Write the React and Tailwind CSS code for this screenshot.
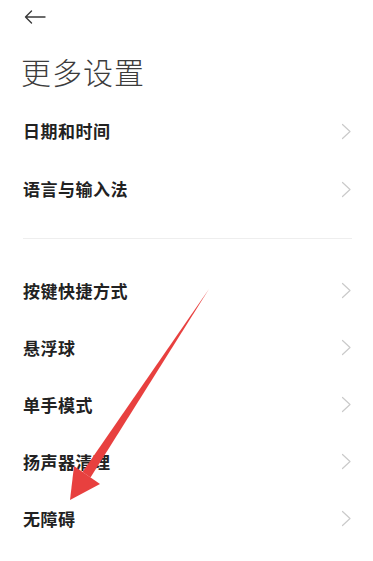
import React from 'react';

const groupOne = ['日期和时间', '语言与输入法'];
const groupTwo = ['按键快捷方式', '悬浮球', '单手模式', '扬声器清理', '无障碍'];

const Chevron = () => (
    <svg width="11" height="17" viewBox="0 0 11 17" fill="none">
        <polyline points="1.5,1.5 9,8.5 1.5,15.5" stroke="#cacaca" strokeWidth="1.2" strokeLinejoin="round" strokeLinecap="round" />
    </svg>
);

const Row = ({ label, h }) => (
    <div className={`flex items-center justify-between pl-[23px] pr-[21px] ${h}`}>
        <span className="text-[17px] font-semibold text-[#222222] tracking-[0.5px]">{label}</span>
        <Chevron />
    </div>
);

export default function App() {
    return (
        <div
            className="relative w-full min-h-[561px] bg-white overflow-hidden"
            style={{ fontFamily: '"Noto Sans CJK SC", "Noto Sans", sans-serif' }}
        >
            {/* back */}
            <div className="h-[34px] flex items-center pl-[24px]">
                <svg width="22" height="14" viewBox="0 0 22 14" fill="none">
                    <path d="M1.5 7H21M7.5 1L1.5 7L7.5 13" stroke="#3a3a3a" strokeWidth="1.4" strokeLinecap="round" strokeLinejoin="round" />
                </svg>
            </div>

            {/* title */}
            <div className="h-[68px] flex items-center pl-[21px] pt-[6px]">
                <h1 className="text-[30px] font-light text-[#3c3c3c] tracking-[1px]">更多设置</h1>
            </div>

            {groupOne.map((item) => (
                <Row key={item} label={item} h="h-[58px]" />
            ))}

            <div className="mt-[20px] mx-[23px] mr-[21px] h-px bg-[#eeeeee]" />

            <div className="mt-[23px]">
                {groupTwo.map((item) => (
                    <Row key={item} label={item} h="h-[57px]" />
                ))}
            </div>

            {/* red annotation arrow */}
            <svg className="absolute inset-0 pointer-events-none" width="373" height="561" viewBox="0 0 373 561">
                <polygon points="209,289 90.5,477.5 82.5,472" fill="#e8403f" />
                <polygon points="70,500 74,466 100,484" fill="#e8403f" />
            </svg>
        </div>
    );
}
